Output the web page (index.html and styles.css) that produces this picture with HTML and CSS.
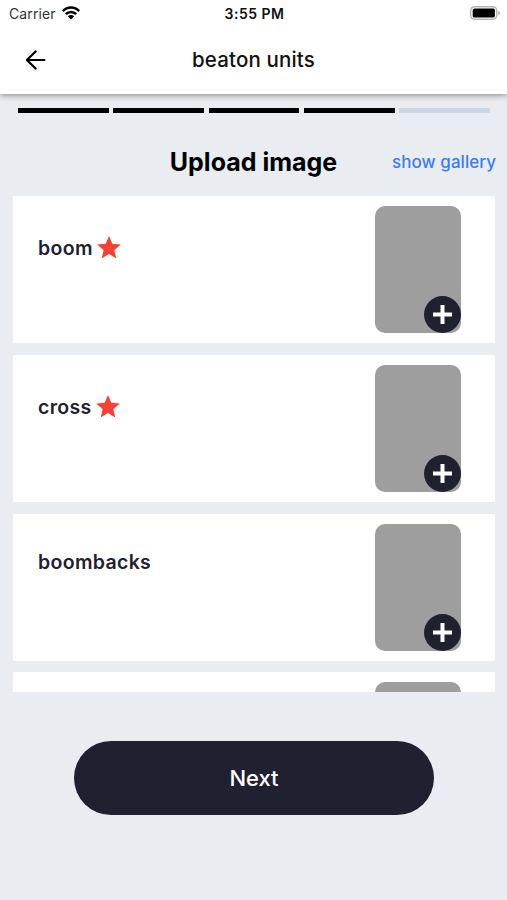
FILE: index.html
```html
<!DOCTYPE html>
<html lang="en">
<head>
<meta charset="utf-8">
<title>beaton units</title>
<link rel="stylesheet" href="styles.css">
</head>
<body>
<header class="header">
  <div class="status">
    <div class="carrier"><span class="carrier-name">Carrier</span>
      <svg class="wifi" viewBox="0 0 18 14"><g fill="none" stroke="#000" stroke-width="2.5"><path d="M.8 5.1C5.3.4 12.7.4 17.2 5.1"/><path d="M3.8 8.2C6.7 5.3 11.3 5.3 14.2 8.2"/></g><path d="M5.8 10.3C7.6 8.6 10.4 8.6 12.2 10.3L9 13.6Z"/></svg>
    </div>
    <span class="time">3:55 PM</span>
    <svg class="battery" viewBox="0 0 30 14"><rect x=".7" y=".7" width="26" height="12.6" rx="3.8" fill="#fff" stroke="#b4b4b4" stroke-width="1.4"/><rect x="2.7" y="2.5" width="22.2" height="9" rx="1.6"/><path d="M28.2 4.8Q30 5.6 30 7T28.2 9.2Z" fill="#aaa"/></svg>
  </div>
  <div class="appbar">
    <svg class="back" viewBox="0 0 20 20"><path d="M18.4 10H1.5M9.6 1.5.9 10l8.7 8.5" fill="none" stroke="#000" stroke-width="2.2" stroke-linejoin="round" stroke-linecap="round"/></svg>
    <h1 class="title">beaton units</h1>
  </div>
</header>
<div class="progress"><i class="step done"></i><i class="step done"></i><i class="step done"></i><i class="step done"></i><i class="step"></i></div>
<div class="heading"><h2 class="upload">Upload image</h2><a class="gallery">show gallery</a></div>
<main class="list">
  <section class="card">
    <div class="label"><span class="boom">boom</span><svg class="star" viewBox="2 2 20 19"><path d="M12 17.27 18.18 21l-1.64-7.03L22 9.24l-7.19-.61L12 2 9.19 8.63 2 9.24l5.46 4.73L5.82 21z"/></svg></div>
    <div class="thumb"><div class="add"><svg class="plus" viewBox="0 0 19 19"><path d="M9.5 0v19M0 9.5h19"/></svg></div></div>
  </section>
  <section class="card">
    <div class="label"><span class="cross">cross</span><svg class="star" viewBox="2 2 20 19"><path d="M12 17.27 18.18 21l-1.64-7.03L22 9.24l-7.19-.61L12 2 9.19 8.63 2 9.24l5.46 4.73L5.82 21z"/></svg></div>
    <div class="thumb"><div class="add"><svg class="plus" viewBox="0 0 19 19"><path d="M9.5 0v19M0 9.5h19"/></svg></div></div>
  </section>
  <section class="card">
    <div class="label plain"><span class="boombacks">boombacks</span></div>
    <div class="thumb"><div class="add"><svg class="plus" viewBox="0 0 19 19"><path d="M9.5 0v19M0 9.5h19"/></svg></div></div>
  </section>
  <section class="card"><div class="label"></div><div class="thumb"></div></section>
</main>
<button class="next"><span>Next</span></button>
</body>
</html>
```
FILE: styles.css
```css
* { box-sizing: border-box; }
body { margin: 0; width: 507px; height: 900px; overflow: hidden; background: #e9edf1; font-family: Inter, "Liberation Sans", sans-serif; color: #1f2030; display: flex; flex-direction: column; }
svg { display: block; flex: none; }
h1, h2 { margin: 0; }
span, a, h1, h2 { white-space: nowrap; }
.header { flex: none; height: 93.7px; background: #fff; box-shadow: 0 1px 6px rgba(0, 0, 0, .45); color: #111; }
.status { height: 26px; padding: 0 7px 0 9px; display: grid; grid-template-columns: 1fr auto 1fr; align-items: center; }
.carrier { display: flex; align-items: center; gap: 6px; }
.carrier-name { font-size: 14px; letter-spacing: .1px; color: #333; }
.wifi { width: 18px; height: 14px; }
.time { font-size: 14px; font-weight: 600; letter-spacing: .5px; }
.battery { width: 30px; height: 14px; justify-self: end; }
.appbar { height: 66px; display: grid; grid-template-columns: 56px 1fr 56px; align-items: center; }
.back { width: 20px; height: 20px; margin: 1px 0 0 25.5px; }
.title { font-size: 20.5px; font-weight: 500; letter-spacing: .15px; text-align: center; }
.progress { flex: none; display: grid; grid-template-columns: repeat(5, 1fr); gap: 4.6px; margin: 15.3px 17px 0 18px; height: 5px; margin-top: 14.3px; }
.step { background: #cbd8e3; }
.done { background: #000; }
.heading { flex: none; height: 83px; padding: 15px 11px 0; display: grid; grid-template-columns: 1fr auto 1fr; align-items: center; }
.upload { grid-column: 2; font-size: 25px; font-weight: 700; color: #000; }
.gallery { justify-self: end; font-size: 17px; font-weight: 500; letter-spacing: .05px; color: #3d7cf4; }
.list { flex: none; height: 496.4px; margin: 0 12.3px 0 13px; overflow: hidden; display: flex; flex-direction: column; gap: 11.8px; }
.card { flex: none; height: 147px; padding: 10px 34px 0 25px; background: #fff; border-radius: 1px; display: flex; justify-content: space-between; align-items: flex-start; }
.label { display: flex; align-items: center; gap: 4px; height: 24px; margin-top: 30px; font-size: 19.5px; font-weight: 600; letter-spacing: .32px; }
.plain { margin-top: 26px; }
.star { width: 24px; height: 22.5px; margin-bottom: 2px; fill: #f44336; }
.thumb { width: 86px; height: 127px; border-radius: 10px; background: #9e9e9e; display: flex; justify-content: flex-end; align-items: flex-end; }
.add { width: 37px; height: 37px; border-radius: 50%; background: #1f2030; display: grid; place-items: center; }
.plus { width: 19px; height: 19px; stroke: #fff; stroke-width: 4; }
.next { flex: none; width: 360px; height: 73.5px; margin: 48.8px 0 0 74px; border: 0; border-radius: 37px; background: #1f2030; color: #fff; font: 500 22px Inter, "Liberation Sans", sans-serif; }
```
